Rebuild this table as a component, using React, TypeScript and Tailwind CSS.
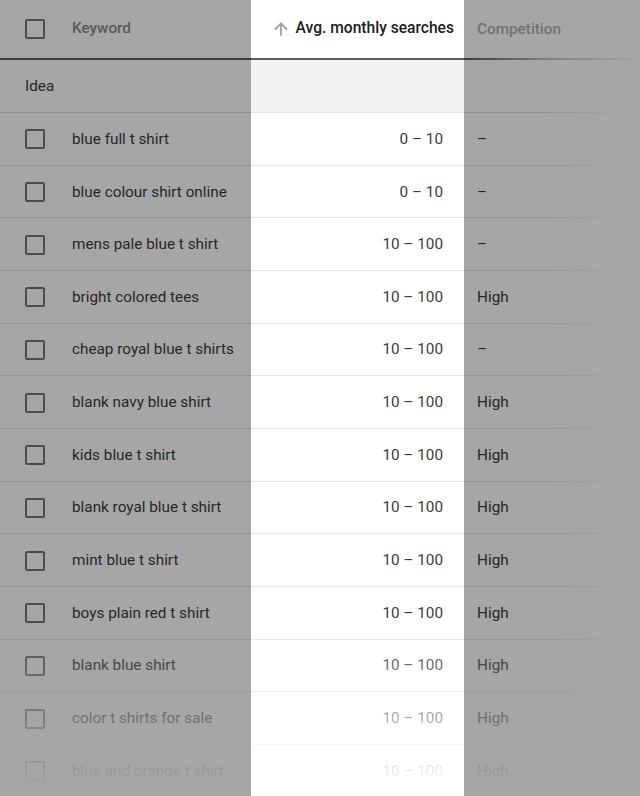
import React from "react";

type Row = { kw: string; avg: string; comp: string };

const rows: Row[] = [
  { kw: "blue full t shirt", avg: "0 – 10", comp: "–" },
  { kw: "blue colour shirt online", avg: "0 – 10", comp: "–" },
  { kw: "mens pale blue t shirt", avg: "10 – 100", comp: "–" },
  { kw: "bright colored tees", avg: "10 – 100", comp: "High" },
  { kw: "cheap royal blue t shirts", avg: "10 – 100", comp: "–" },
  { kw: "blank navy blue shirt", avg: "10 – 100", comp: "High" },
  { kw: "kids blue t shirt", avg: "10 – 100", comp: "High" },
  { kw: "blank royal blue t shirt", avg: "10 – 100", comp: "High" },
  { kw: "mint blue t shirt", avg: "10 – 100", comp: "High" },
  { kw: "boys plain red t shirt", avg: "10 – 100", comp: "High" },
  { kw: "blank blue shirt", avg: "10 – 100", comp: "High" },
  { kw: "color t shirts for sale", avg: "10 – 100", comp: "High" },
  { kw: "blue and orange t shirt", avg: "10 – 100", comp: "High" },
];

function Checkbox() {
  return (
    <div className="w-[20px] h-[20px] shrink-0 rounded-[2px] border-[2.5px] border-[#767676]" />
  );
}

export default function App() {
  return (
    <div
      className="relative w-[640px] h-[796px] overflow-hidden bg-white"
      style={{ fontFamily: "Roboto, 'Noto Sans', sans-serif" }}
    >
      {/* Header */}
      <div className="flex h-[57.5px] items-center">
        <div className="w-[251px] flex items-center pl-[25px]">
          <Checkbox />
          <span className="ml-[27px] text-[15.3px] font-medium text-[#8a8a8a]">Keyword</span>
        </div>
        <div className="w-[213px] flex items-center justify-end pr-[10px]">
          <svg width="20" height="20" viewBox="0 0 24 24" className="mr-[5px] fill-[#9a9a9a]">
            <path d="M4 12l1.41 1.41L11 7.83V20h2V7.83l5.58 5.59L20 12l-8-8-8 8z" />
          </svg>
          <span className="text-[15.6px] font-medium text-[#202020]">Avg. monthly searches</span>
        </div>
        <div className="flex-1 pl-[13px]">
          <span className="text-[15.3px] font-medium text-[#b0b0b0]">Competition</span>
        </div>
      </div>
      <div className="flex h-[2.5px]">
        <div className="w-[464px] bg-[#5c5c5c]" />
        <div className="flex-1 bg-gradient-to-r from-[#5c5c5c] via-[#c8c8c8] to-white" />
      </div>

      {/* Idea row */}
      <div className="flex h-[53px] border-b border-[#e2e2e2]">
        <div className="w-[251px] flex items-center pl-[25px] text-[15.3px] text-[#3c3c3c]">Idea</div>
        <div className="w-[213px] bg-[#f3f3f3]" />
        <div className="flex-1" />
      </div>

      {/* Rows */}
      {rows.map((r) => (
        <div key={r.kw} className="flex h-[52.67px] border-b border-[#e6e6e6] items-center pt-[1px]">
          <div className="w-[251px] flex items-center pl-[25px]">
            <Checkbox />
            <span className="ml-[27px] text-[15.3px] text-[#3c3c3c] whitespace-nowrap">{r.kw}</span>
          </div>
          <div className="w-[213px] text-right pr-[21px] text-[15.3px] text-[#3c3c3c]">{r.avg}</div>
          <div className="flex-1 pl-[13px] text-[15.3px] text-[#3c3c3c]">{r.comp}</div>
        </div>
      ))}

      {/* right-side fade */}
      <div className="absolute top-[60px] bottom-0 left-[540px] right-0 bg-gradient-to-r from-transparent to-white to-90%" />
      {/* bottom fade */}
      <div className="absolute left-0 right-0 top-[625px] bottom-0 bg-gradient-to-b from-white/0 to-white to-95%" />

      {/* dimming overlays */}
      <div className="absolute left-0 top-0 w-[251px] h-full bg-black/35" />
      <div className="absolute left-[464px] right-0 top-0 h-full bg-black/35" />
    </div>
  );
}
